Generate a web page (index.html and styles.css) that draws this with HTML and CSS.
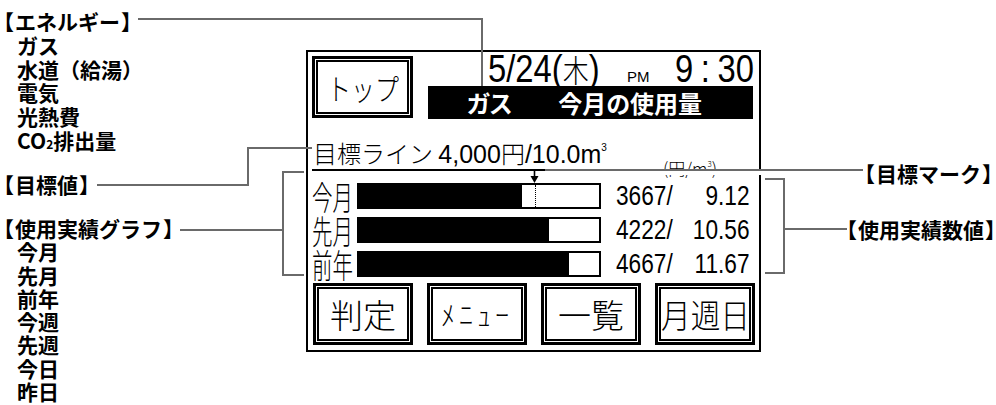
FILE: index.html
```html
<!DOCTYPE html>
<html>
  <head>
    <meta charset="utf-8">
    <meta name="viewport" content="width=device-width, initial-scale=1.0">
    <title>エネルギー表示画面</title>
    <link rel="stylesheet" href="styles.css">
  </head>
  <body>
    <div class="sheet">

      <div class="panel">
        <div class="head">
          <div class="btn btn-top"><div class="btn-face"><span class="squeeze">トップ</span></div></div>
          <div class="head-side">
            <div class="clock">
              <span class="date"><span class="nl">5/24(<span class="day">木</span>)</span></span>
              <span class="pm">PM</span>
              <span class="time"><span class="nl">9<span class="colon">:</span>30</span></span>
            </div>
            <div class="title-bar"><span>ガス</span><span>今月の使用量</span></div>
          </div>
        </div>

        <div class="goal">
          <div class="goal-text">目標ライン <span class="num">4,000</span>円<span class="num">/10.0m<span class="cube">3</span></span></div>
          <div class="unit">(円/m<span class="cube-s">3</span>)</div>
        </div>

        <div class="bars">
          <div class="bar-row">
            <div class="bar-label"><span class="squeeze-l">今月</span></div>
            <div class="bar">
              <div class="bar-fill" style="width: 68%"></div>
              <div class="goal-mark"></div>
              <svg class="goal-arrow" width="9" height="13" viewBox="0 0 9 13"><path d="M4.5 0V6" stroke="#000" stroke-width="1.6"/><path d="M0.5 5H8.5L4.5 12Z"/></svg>
            </div>
            <div class="bar-nums"><span class="total"><span class="nl">3667/</span></span><span class="per"><span class="nr">9.12</span></span></div>
          </div>
          <div class="bar-row">
            <div class="bar-label"><span class="squeeze-l">先月</span></div>
            <div class="bar"><div class="bar-fill" style="width: 79%"></div></div>
            <div class="bar-nums"><span class="total"><span class="nl">4222/</span></span><span class="per"><span class="nr">10.56</span></span></div>
          </div>
          <div class="bar-row">
            <div class="bar-label"><span class="squeeze-l">前年</span></div>
            <div class="bar"><div class="bar-fill" style="width: 87.5%"></div></div>
            <div class="bar-nums"><span class="total"><span class="nl">4667/</span></span><span class="per"><span class="nr">11.67</span></span></div>
          </div>
        </div>

        <div class="buttons">
          <div class="btn"><div class="btn-face">判定</div></div>
          <div class="btn"><div class="btn-face"><span class="menu">ﾒﾆｭｰ</span></div></div>
          <div class="btn"><div class="btn-face">一覧</div></div>
          <div class="btn"><div class="btn-face"><span class="squeeze-w">月週日</span></div></div>
        </div>
      </div>

      <!-- callouts -->
      <div class="note note-energy"><span class="bl">【</span>エネルギー<span class="br">】</span>
        <ul>
          <li>ガス</li>
          <li>水道（給湯）</li>
          <li>電気</li>
          <li>光熱費</li>
          <li>CO<span class="sub">2</span>排出量</li>
        </ul>
      </div>
      <div class="note note-target"><span class="bl">【</span>目標値<span class="br">】</span></div>
      <div class="note note-graph"><span class="bl">【</span>使用実績グラフ<span class="br">】</span>
        <ul>
          <li>今月</li>
          <li>先月</li>
          <li>前年</li>
          <li>今週</li>
          <li>先週</li>
          <li>今日</li>
          <li>昨日</li>
        </ul>
      </div>
      <div class="note note-mark"><span class="bl">【</span>目標マーク<span class="br">】</span></div>
      <div class="note note-values"><span class="bl">【</span>使用実績数値<span class="br">】</span></div>

      <div class="lead energy-h"></div>
      <div class="lead energy-v"></div>
      <div class="lead target-h1"></div>
      <div class="lead target-v"></div>
      <div class="lead target-h2"></div>
      <div class="lead graph-h"></div>
      <div class="bracket graph-br"></div>
      <div class="lead-mask mark-h"></div>
      <div class="lead values-h"></div>
      <div class="bracket values-br"></div>

    </div>
  </body>
</html>
```

FILE: styles.css
```css
html, body {
  margin: 0;
  padding: 0;
  background: #fff;
  color: #000;
  font-family: "Noto Sans CJK JP", sans-serif;
}
.sheet {
  position: relative;
  width: 996px;
  height: 405px;
  padding: 50px 0 0 306px;
  box-sizing: border-box;
  overflow: hidden;
}

/* callout labels */
.note {
  position: absolute;
  font-size: 21px;
  font-weight: 700;
  line-height: 24px;
  white-space: nowrap;
}
.note .bl,
.note .br {
  font-feature-settings: "palt";
}
.note .bl { margin-right: 1.5px; }
.note .br { margin-left: 1.5px; }
.note ul {
  list-style: none;
  margin: 0;
  padding: 0 0 0 14px;
}
.note .sub {
  font-size: 12px;
}
.note-energy { left: 3px; top: 10px; line-height: 23.8px; }
.note-target { left: 3px; top: 172px; }
.note-graph { left: 3px; top: 217px; line-height: 23.3px; }
.note-mark { left: 864px; top: 161px; }
.note-values { left: 846px; top: 217px; }

.lead {
  position: absolute;
  background: #6a6a6a;
}
.energy-h { left: 138px; top: 18px; width: 345px; height: 2px; }
.energy-v { left: 481px; top: 18px; width: 2px; height: 68px; }
.target-h1 { left: 97px; top: 184px; width: 152px; height: 2px; }
.target-v { left: 247px; top: 147px; width: 2px; height: 39px; }
.target-h2 { left: 247px; top: 147px; width: 65px; height: 2px; }
.graph-h { left: 180px; top: 229px; width: 103px; height: 2px; }
.values-h { left: 783px; top: 228px; width: 64px; height: 2px; }
.bracket {
  position: absolute;
  box-sizing: border-box;
  border: 2px solid #6a6a6a;
}
.graph-br { left: 282px; top: 171px; width: 22px; height: 105px; border-right: none; }
.values-br { left: 765px; top: 178px; width: 20px; height: 96px; border-left: none; }
.lead-mask {
  position: absolute;
  box-sizing: border-box;
  border-top: 2px solid #6a6a6a;
  background: #fff;
}
.mark-h { left: 545px; top: 169px; width: 318px; height: 6px; }

/* display panel */
.panel {
  width: 455px;
  height: 302px;
  box-sizing: border-box;
  border: 2px solid #000;
  padding: 4px 0 5px 4px;
  display: flex;
  flex-direction: column;
  font-weight: 300;
}
.head {
  display: flex;
}
.btn {
  box-sizing: border-box;
  width: 100px;
  height: 62px;
  border: 3px solid #000;
  padding: 1px;
}
.btn-top {
  width: 101px;
}
.btn-face {
  box-sizing: border-box;
  height: 100%;
  border: 2px solid #000;
  display: flex;
  align-items: center;
  justify-content: center;
  font-size: 33px;
  white-space: nowrap;
}
.squeeze {
  display: inline-block;
  font-size: 30px;
  transform: scaleX(.8);
}
.squeeze-w {
  display: inline-block;
  transform: scaleX(.9);
}
.menu {
  font-size: 28px;
  letter-spacing: 4px;
}
.head-side {
  margin-left: 15px;
  width: 325px;
}
.clock {
  height: 30px;
  display: flex;
  align-items: baseline;
  font-family: "Liberation Sans", sans-serif;
  font-size: 39px;
  line-height: 26px;
  white-space: nowrap;
}
.nl, .nr {
  display: inline-block;
  transform: scaleX(.84);
  transform-origin: left center;
}
.nr {
  transform-origin: right center;
}
.date { width: 112px; margin-left: 60px; }
.day {
  font-family: "Noto Sans CJK JP", sans-serif;
  font-size: 31px;
}
.pm { font-size: 15px; margin-left: 27px; }
.time { margin-left: 25px; }
.colon { margin: 0 9px; }
.title-bar {
  height: 33px;
  background: #000;
  color: #fff;
  font-weight: 700;
  font-size: 24px;
  display: flex;
  justify-content: center;
  align-items: center;
  gap: 46px;
  padding-right: 12px;
  font-feature-settings: "palt";
}

.goal {
  display: flex;
  margin-top: 14px;
}
.goal-text {
  width: 301px;
  box-sizing: border-box;
  border-bottom: 2px solid #000;
  padding-left: 1px;
  font-size: 24px;
  line-height: 29px;
  white-space: nowrap;
}
.num {
  font-family: "Liberation Sans", sans-serif;
  font-size: 25px;
}
.cube {
  font-size: 10px;
  vertical-align: 12px;
}
.unit {
  align-self: flex-end;
  margin: 0 0 -7px 50px;
  font-size: 17px;
  line-height: 20px;
  white-space: nowrap;
}
.cube-s {
  font-size: 8px;
  vertical-align: 8px;
}

.bars {
  margin-top: 12px;
  display: flex;
  flex-direction: column;
  gap: 8px;
}
.bar-row {
  display: flex;
  align-items: center;
  height: 26px;
}
.bar-label {
  width: 45px;
  font-size: 33px;
  line-height: 26px;
  white-space: nowrap;
}
.squeeze-l {
  display: inline-block;
  transform: scaleX(.62);
  transform-origin: left center;
}
.bar {
  position: relative;
  width: 244px;
  height: 26px;
  box-sizing: border-box;
  border: 2px solid #000;
}
.bar-fill {
  height: 100%;
  background: #000;
}
.goal-mark {
  position: absolute;
  top: 0;
  bottom: 0;
  left: 176px;
  border-left: 1px dotted #000;
}
.goal-arrow {
  position: absolute;
  left: 171px;
  top: -14px;
}
.bar-nums {
  margin-left: 15px;
  width: 134px;
  display: flex;
  font-family: "Liberation Sans", sans-serif;
  font-size: 27px;
  line-height: 26px;
  white-space: nowrap;
}
.bar-nums .total { width: 62px; }
.bar-nums .per { flex: 1; text-align: right; }

.buttons {
  margin-top: auto;
  display: flex;
  gap: 14px;
  padding-left: 1px;
}
```
